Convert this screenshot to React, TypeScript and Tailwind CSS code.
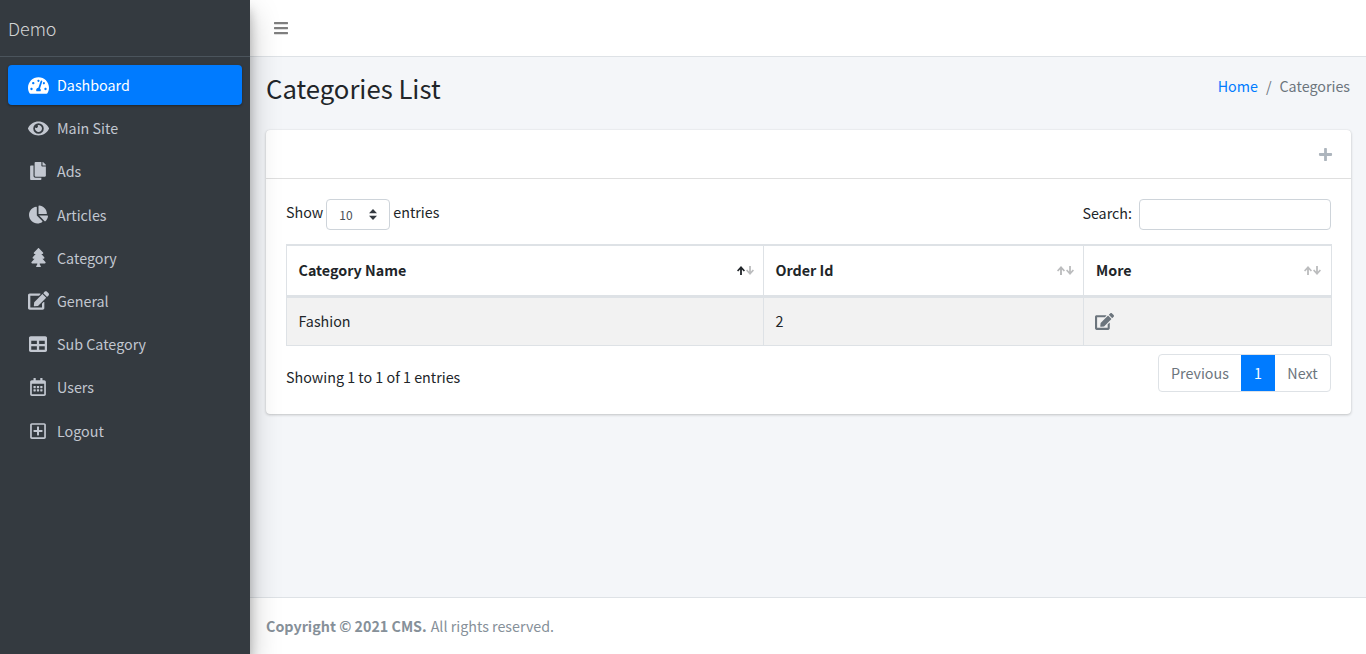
import React from "react";
import { FaTachometerAlt, FaEye, FaCopy, FaChartPie, FaTree, FaEdit, FaTable, FaRegCalendarAlt, FaRegPlusSquare, FaBars, FaPlus } from "react-icons/fa";

const nav = [
  { label: "Dashboard", Icon: FaTachometerAlt, size: 21, active: true },
  { label: "Main Site", Icon: FaEye, size: 21 },
  { label: "Ads", Icon: FaCopy, size: 18 },
  { label: "Articles", Icon: FaChartPie, size: 19 },
  { label: "Category", Icon: FaTree, size: 19 },
  { label: "General", Icon: FaEdit, size: 21 },
  { label: "Sub Category", Icon: FaTable, size: 18 },
  { label: "Users", Icon: FaRegCalendarAlt, size: 18 },
  { label: "Logout", Icon: FaRegPlusSquare, size: 18 },
];

function Sort({ active, last }: { active?: boolean; last?: boolean }) {
  return (
    <span className={"absolute top-[20px] flex gap-[1px] " + (last ? "right-[10px]" : "right-[9px]")}>
      <svg viewBox="0 0 8 9" className={"h-[9px] w-[8px] " + (active ? "opacity-100" : "opacity-30")}>
        <path d="M4 0L8 4.4L6.8 5.5L4.9 3.5V9H3.1V3.5L1.2 5.5L0 4.4z" fill="#212529" />
      </svg>
      <svg viewBox="0 0 8 9" className="h-[9px] w-[8px] opacity-30">
        <path d="M4 9L8 4.6L6.8 3.5L4.9 5.5V0H3.1V5.5L1.2 3.5L0 4.6z" fill="#212529" />
      </svg>
    </span>
  );
}

export default function App() {
  return (
    <div className="flex h-[654px] w-[1366px] overflow-hidden bg-[#f4f6f9] text-[14.3px] text-[#212529] font-['Noto_Sans_CJK_SC','Source_Sans_Pro',sans-serif]">
      <aside className="relative z-10 w-[250px] shrink-0 bg-[#343a40] shadow-[0_14px_28px_rgba(0,0,0,0.25),0_10px_10px_rgba(0,0,0,0.22)]">
        <div className="h-[57px] border-b border-[#4b545c] pl-2 pt-[16px] text-[17.9px] leading-[24px] font-light text-[rgba(255,255,255,0.8)]">Demo</div>
        <nav className="flex flex-col gap-[3.2px] px-2 pt-2">
          {nav.map(({ label, Icon, size, active }) => (
            <a
              key={label}
              className={
                "flex h-[40px] items-center rounded-[4px] " +
                (active
                  ? "bg-[#007bff] text-white shadow-[0_1px_3px_rgba(0,0,0,0.12),0_1px_2px_rgba(0,0,0,0.24)]"
                  : "text-[#c2c7d0]")
              }
            >
              <span className="flex w-[49px] shrink-0 justify-center pl-[11px]">
                <Icon size={size} />
              </span>
              <span className="relative top-[0.1px] leading-[24px]">{label}</span>
            </a>
          ))}
        </nav>
      </aside>

      <main className="flex min-w-0 flex-1 flex-col">
        <header className="flex h-[57px] shrink-0 items-center border-b border-[#dee2e6] bg-white pl-[23px]">
          <FaBars size={16} className="text-[rgba(0,0,0,0.5)]" />
        </header>

        <div className="flex h-[73px] items-start justify-between pl-4 pr-4 pt-[13px]">
          <h1 className="text-[25.7px] leading-[35px] font-normal text-[#212529]">Categories List</h1>
          <div className="flex items-center pt-[4px] leading-[24px]">
            <a className="text-[#007bff]">Home</a>
            <span className="px-2 text-[#6c757d]">/</span>
            <span className="text-[#6c757d]">Categories</span>
          </div>
        </div>

        <section className="ml-4 mr-[15px] h-[284px] rounded-[4px] bg-white shadow-[0_0_1px_rgba(0,0,0,0.125),0_1px_3px_rgba(0,0,0,0.2)]">
          <div className="flex h-[49px] items-center justify-end border-b border-[rgba(0,0,0,0.125)] pr-[18px]">
            <FaPlus size={15} className="text-[#adb5bd]" />
          </div>
          <div className="px-5 pt-5">
            <div className="flex h-[31px] items-center justify-between">
              <div className="flex items-center">
                <span className="relative -top-[3px]">Show</span>
                <div className="relative mx-[3px] h-[31px] w-[64px]">
                  <select className="h-full w-full appearance-none rounded-[4px] border border-[#ced4da] bg-white pl-[12px] text-[12px] text-[#495057] outline-none">
                    <option>10</option>
                  </select>
                  <svg viewBox="0 0 8 11" className="pointer-events-none absolute right-[13px] top-[10px] h-[11px] w-[8px]">
                    <path d="M4 0L8 4.2H0zM4 11L0 6.8h8z" fill="#343a40" />
                  </svg>
                </div>
                <span className="relative -top-[3px]">entries</span>
              </div>
              <div className="flex items-center">
                <span className="relative -top-[2px] mr-[7px]">Search:</span>
                <input className="h-[31px] w-[192px] rounded-[4px] border border-[#ced4da] bg-white outline-none" />
              </div>
            </div>

            <table className="mt-[14px] w-[1045px] table-fixed border-collapse border border-[#dee2e6]">
              <colgroup>
                <col className="w-[477px]" />
                <col className="w-[320px]" />
                <col className="w-[248px]" />
              </colgroup>
              <thead>
                <tr className="h-[51px] border-t-2 border-b-[3px] border-[#dee2e6]">
                  <th className="relative border-x border-[#dee2e6] pl-[11.5px] pr-3 pb-[2px] text-left font-bold">Category Name<Sort active /></th>
                  <th className="relative border-x border-[#dee2e6] pl-[11.5px] pr-3 pb-[2px] text-left font-bold">Order Id<Sort /></th>
                  <th className="relative border-x border-[#dee2e6] px-3 pb-[2px] text-left font-bold">More<Sort last /></th>
                </tr>
              </thead>
              <tbody>
                <tr className="h-[49px] bg-[#f2f2f2]">
                  <td className="border border-[#dee2e6] pl-[11.5px] pr-3">Fashion</td>
                  <td className="border border-[#dee2e6] pl-[11.5px] pr-3">2</td>
                  <td className="border border-[#dee2e6] pl-[11px] pr-3"><FaEdit size={19} className="text-[#6c757d]" /></td>
                </tr>
              </tbody>
            </table>

            <div className="mt-[8px] flex items-start justify-between">
              <div className="pt-[11px] leading-[24px]">Showing 1 to 1 of 1 entries</div>
              <div className="flex h-[38px] overflow-hidden rounded-[4px] border border-[#dee2e6] leading-[24px]">
                <span className="flex w-[82px] items-center justify-center text-[#6c757d]">Previous</span>
                <span className="-my-[1px] flex w-[34px] items-center justify-center bg-[#007bff] text-white">1</span>
                <span className="flex w-[55px] items-center justify-center text-[#6c757d]">Next</span>
              </div>
            </div>
          </div>
        </section>

        <footer className="mt-auto flex h-[57px] shrink-0 items-center border-t border-[#dee2e6] bg-white pl-4 text-[#869099]">
          <strong className="font-bold">Copyright © 2021 CMS.</strong>
          <span className="ml-[4px]">All rights reserved.</span>
        </footer>
      </main>
    </div>
  );
}
